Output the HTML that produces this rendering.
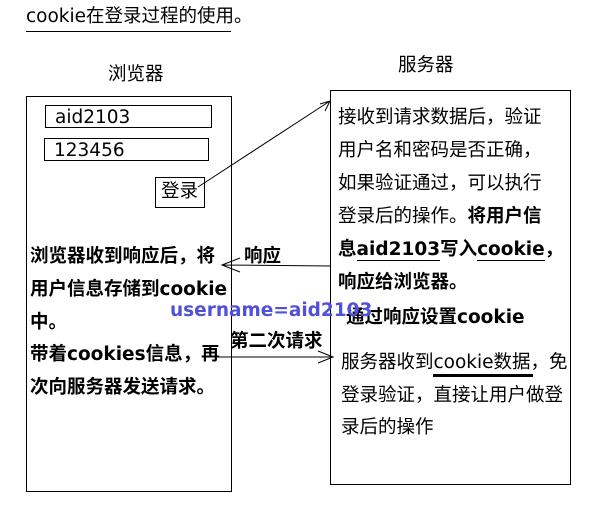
<html><head><style>
body{margin:0;width:613px;height:517px;background:#fff;position:relative;overflow:hidden;font-family:"DejaVu Sans","Noto Sans CJK SC",sans-serif;color:#000}
.t{position:absolute;white-space:nowrap;font-size:18.5px;line-height:22px}
.b{font-weight:bold}
.box{position:absolute;border:1px solid #000}
u{text-decoration:none;border-bottom:1px solid #000}
</style></head><body>
<div class="t" style="left:26px;top:6px">cookie在登录过程的使用。</div>
<div style="position:absolute;left:26px;top:31px;width:205px;height:1px;background:#000"></div>
<div class="t" style="left:108px;top:64px">浏览器</div>
<div class="t" style="left:398px;top:55px">服务器</div>
<div class="box" style="left:26px;top:96px;width:204px;height:394px"></div>
<div class="box" style="left:330px;top:90px;width:239px;height:393px"></div>
<div class="box" style="left:45px;top:105px;width:165px;height:21px"></div>
<div class="t" style="left:55px;top:107px">aid2103</div>
<div class="box" style="left:44px;top:138px;width:163px;height:21px"></div>
<div class="t" style="left:54px;top:140px">123456</div>
<div class="box" style="left:155px;top:177px;width:48px;height:29px"></div>
<div class="t" style="left:161px;top:181px">登录</div>
<svg style="position:absolute;left:0;top:0" width="613" height="517">
<g stroke="#000" stroke-width="1" fill="none">
<path d="M198,187 L330,101 M320,104 L330,101 M325,111 L330,101"/>
<path d="M331,266 L222,265 M240,258 L222,265 L240,272"/>
<path d="M216,357 L333,357 M318,351 L333,357 L318,363"/>
</g></svg>
<div class="t b" style="left:30px;top:246px">浏览器收到响应后，将</div>
<div class="t b" style="left:30px;top:279px">用户信息存储到cookie</div>
<div class="t b" style="left:30px;top:312px">中。</div>
<div class="t b" style="left:30px;top:344px">带着cookies信息，再</div>
<div class="t b" style="left:30px;top:377px">次向服务器发送请求。</div>
<div class="t b" style="left:244px;top:246px">响应</div>
<div class="t b" style="left:230px;top:331px">第二次请求</div>
<div class="t" style="left:338px;top:107px">接收到请求数据后，验证</div>
<div class="t" style="left:338px;top:140px">用户名和密码是否正确，</div>
<div class="t" style="left:338px;top:173px">如果验证通过，可以执行</div>
<div class="t" style="left:338px;top:206px">登录后的操作。<b>将用户信</b></div>
<div class="t b" style="left:338px;top:239px">息<u>aid2103</u>写入<u>cookie</u>，</div>
<div class="t b" style="left:338px;top:272px">响应给浏览器。</div>
<div class="t b" style="left:346px;top:307px">通过响应设置cookie</div>
<div class="t b" style="left:170px;top:300px;color:#5050d8">username=aid2103</div>
<div class="t" style="left:341px;top:352px">服务器收到cookie数据，免</div>
<div style="position:absolute;left:433px;top:374px;width:100px;height:3px;background:#000"></div>
<div class="t" style="left:341px;top:385px">登录验证，直接让用户做登</div>
<div class="t" style="left:341px;top:417px">录后的操作</div>
</body></html>
